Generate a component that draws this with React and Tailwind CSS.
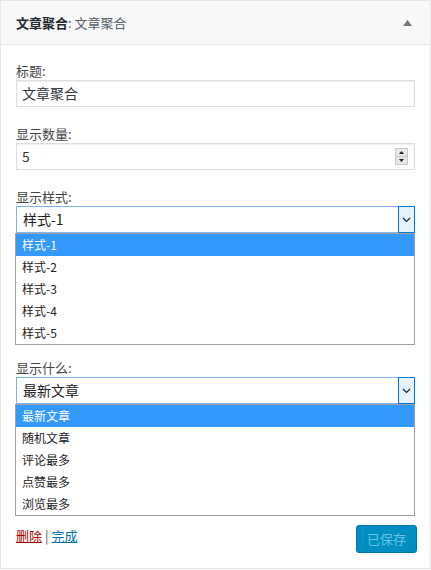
import React from 'react'

const font = { fontFamily: '"Noto Sans CJK SC", "Noto Sans", sans-serif' }

const Label = ({ children, className = '' }) => (
  <div className={`text-[13px] leading-[19px] text-[#444] ${className}`}>{children}</div>
)

const Chevron = () => (
  <svg width="9" height="6" viewBox="0 0 9 6" fill="none">
    <path d="M1 1l3.5 3.5L8 1" stroke="#222" strokeWidth="1.2" />
  </svg>
)

const OpenSelect = ({ value, options }) => (
  <div>
    <div className="flex h-[27px] w-[399px] border border-[#7eb4ea] bg-white">
      <div className="flex-1 pl-[6px] text-[14px] leading-[25px] text-[#222]">{value}</div>
      <div className="flex w-[17px] items-center justify-center border border-[#0078d7] bg-[#e5f1fb] -my-[1px] -mr-[1px]">
        <Chevron />
      </div>
    </div>
    <div className="-ml-[1px] w-[400px] border border-[#a0a0a0] bg-white">
      {options.map((o, i) => (
        <div
          key={o}
          className={`h-[22px] pl-[6px] text-[12px] leading-[22px] ${i === 0 ? 'bg-[#3399ff] text-white' : 'text-[#222]'}`}
        >
          {o}
        </div>
      ))}
    </div>
  </div>
)

export default function App() {
  return (
    <div className="h-[570px] w-[431px] bg-white" style={font}>
      <div className="h-[569px] border border-[#e5e5e5] bg-white">
        {/* Header */}
        <div className="flex h-[44px] items-center justify-between border-b border-[#e5e5e5] bg-[#f8f8f8] pl-[15px] pr-[18px]">
          <div className="text-[13px] text-[#23282d]">
            <span className="font-bold">文章聚合</span>
            <span className="text-[#555d66]">: 文章聚合</span>
          </div>
          <svg width="9" height="6" viewBox="0 0 9 6">
            <path d="M0 6L4.5 0L9 6z" fill="#72777c" />
          </svg>
        </div>

        <div className="pl-[15px] pt-[16px]">
          <Label>标题:</Label>
          <div className="h-[27px] w-[399px] border border-[#ddd] pl-[5px] text-[14px] leading-[25px] text-[#32373c] shadow-[inset_0_1px_2px_rgba(0,0,0,0.07)]">
            文章聚合
          </div>

          <Label className="mt-[17px]">显示数量:</Label>
          <div className="flex h-[27px] w-[399px] items-center border border-[#ddd] pl-[5px] pr-[6px] text-[14px] text-[#32373c] shadow-[inset_0_1px_2px_rgba(0,0,0,0.07)]">
            <span className="flex-1">5</span>
            <div className="flex h-[17px] w-[13px] flex-col border border-[#c8c8c8] bg-[#e8e8e8]">
              <div className="flex flex-1 items-center justify-center border-b border-[#c8c8c8]">
                <svg width="5" height="3" viewBox="0 0 5 3"><path d="M0 3L2.5 0L5 3z" fill="#222" /></svg>
              </div>
              <div className="flex flex-1 items-center justify-center">
                <svg width="5" height="3" viewBox="0 0 5 3"><path d="M0 0L2.5 3L5 0z" fill="#222" /></svg>
              </div>
            </div>
          </div>

          <Label className="mt-[17px]">显示样式:</Label>
          <OpenSelect value="样式-1" options={['样式-1', '样式-2', '样式-3', '样式-4', '样式-5']} />

          <Label className="mt-[13px]">显示什么:</Label>
          <OpenSelect value="最新文章" options={['最新文章', '随机文章', '评论最多', '点赞最多', '浏览最多']} />

          <div className="mt-[9px] flex w-[401px] items-start justify-between">
            <div className="pt-[1px] text-[13px] leading-[19px] text-[#555]">
              <a className="text-[#a00] underline">删除</a>
              <span className="mx-[3px]">|</span>
              <a className="text-[#0073aa] underline">完成</a>
            </div>
            <button className="h-[28px] w-[61px] rounded-[3px] border border-[#0073aa] bg-[#008ec2] text-[13px] text-[#66c6e4]">
              已保存
            </button>
          </div>
        </div>
      </div>
    </div>
  )
}
